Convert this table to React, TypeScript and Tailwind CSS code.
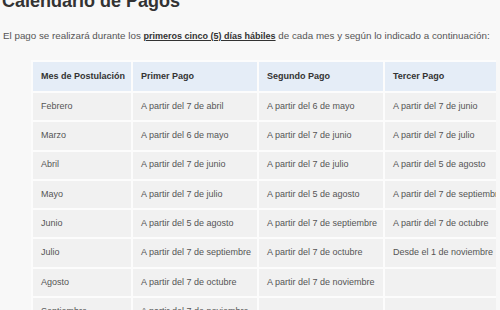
import React from "react";

const rows: [string, string, string, string][] = [
  ["Febrero", "A partir del 7 de abril", "A partir del 6 de mayo", "A partir del 7 de junio"],
  ["Marzo", "A partir del 6 de mayo", "A partir del 7 de junio", "A partir del 7 de julio"],
  ["Abril", "A partir del 7 de junio", "A partir del 7 de julio", "A partir del 5 de agosto"],
  ["Mayo", "A partir del 7 de julio", "A partir del 5 de agosto", "A partir del 7 de septiembre"],
  ["Junio", "A partir del 5 de agosto", "A partir del 7 de septiembre", "A partir del 7 de octubre"],
  ["Julio", "A partir del 7 de septiembre", "A partir del 7 de octubre", "Desde el 1 de noviembre"],
  ["Agosto", "A partir del 7 de octubre", "A partir del 7 de noviembre", ""],
  ["Septiembre", "A partir del 7 de noviembre", "", ""],
];

export default function App() {
  return (
    <div
      className="w-[500px] h-[310px] overflow-hidden bg-[#f8f8f8] text-[#555]"
      style={{ fontFamily: '"Liberation Sans", Arial, sans-serif' }}
    >
      <h1 className="-mt-[10px] ml-[2px] text-[18px] leading-[22px] font-bold text-[#333] whitespace-nowrap">
        Calendario de Pagos
      </h1>
      <p className="mt-[18px] ml-[3px] text-[9.8px] leading-[12px] whitespace-nowrap">
        El pago se realizará durante los{" "}
        <span className="text-[9px] font-bold underline text-[#333]">primeros cinco (5) días hábiles</span>{" "}
        de cada mes y según lo indicado a continuación:
      </p>
      <div className="mt-[18px] ml-[31px] w-[465px] overflow-hidden">
        <table className="table-fixed w-[530px] border-separate border-spacing-[2px] bg-[#fcfcfc] text-[9px]">
          <thead>
            <tr>
              <th className="w-[98px] h-[29px] bg-[#e5edf7] text-left font-bold text-[#333] pl-[8px] whitespace-nowrap">
                Mes de Postulación
              </th>
              <th className="w-[124px] h-[29px] bg-[#e5edf7] text-left font-bold text-[#333] pl-[8px] whitespace-nowrap">
                Primer Pago
              </th>
              <th className="w-[124px] h-[29px] bg-[#e5edf7] text-left font-bold text-[#333] pl-[8px] whitespace-nowrap">
                Segundo Pago
              </th>
              <th className="h-[29px] bg-[#e5edf7] text-left font-bold text-[#333] pl-[8px] whitespace-nowrap">
                Tercer Pago
              </th>
            </tr>
          </thead>
          <tbody>
            {rows.map((r) => (
              <tr key={r[0]}>
                {r.map((c, i) => (
                  <td
                    key={i}
                    className="h-[27.3px] bg-[#f1f1f1] pl-[8px] whitespace-nowrap overflow-hidden text-[#555]"
                  >
                    {c}
                  </td>
                ))}
              </tr>
            ))}
          </tbody>
        </table>
      </div>
    </div>
  );
}
